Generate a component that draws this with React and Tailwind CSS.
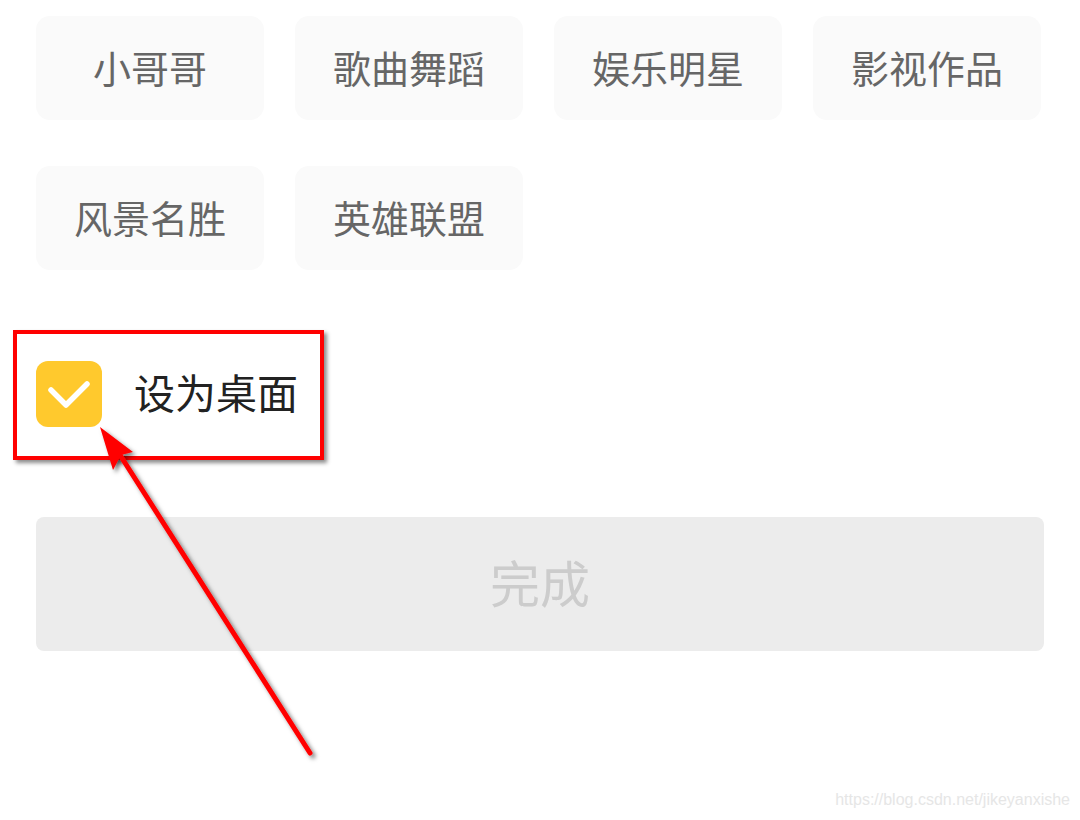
import { useState } from "react";

const tags = ["小哥哥", "歌曲舞蹈", "娱乐明星", "影视作品", "风景名胜", "英雄联盟"];

export default function App() {
  const [checked, setChecked] = useState(true);

  return (
    <div
      className="relative h-[820px] w-[1080px] overflow-hidden bg-white"
      style={{ fontFamily: '"Noto Sans CJK SC", "Noto Sans", sans-serif' }}
    >
      <div className="px-9 pt-4">
        {/* Tags */}
        <div className="grid grid-cols-[repeat(4,228px)] gap-x-[31px] gap-y-[46px]">
          {tags.map((t) => (
            <button
              key={t}
              className="flex h-[104px] items-center justify-center rounded-[14px] bg-[#fafafa] pb-1 text-[38px] text-[#666666]"
            >
              {t}
            </button>
          ))}
        </div>

        {/* Set as wallpaper */}
        <div className="mt-[91px] flex h-[66px] items-center gap-8">
          <button
            onClick={() => setChecked(!checked)}
            className={`flex h-[66px] w-[66px] shrink-0 items-center justify-center rounded-[12px] ${
              checked ? "bg-[#ffc92d]" : "bg-[#eeeeee]"
            }`}
          >
            {checked && (
              <svg width="66" height="66" viewBox="0 0 66 66">
                <path
                  d="M15 29 L30 44 L51 23"
                  fill="none"
                  stroke="white"
                  strokeWidth="5.5"
                  strokeLinecap="round"
                  strokeLinejoin="round"
                />
              </svg>
            )}
          </button>
          <span className="pb-1.5 text-[41px] leading-[56px] text-[#222222]">设为桌面</span>
        </div>

        {/* Done */}
        <button className="mt-[90px] flex h-[134px] w-[1008px] items-center justify-center rounded-[8px] bg-[#ececec] pb-1.5 text-[50px] text-[#cccccc]">
          完成
        </button>
      </div>

      {/* Annotation: red frame */}
      <div className="pointer-events-none absolute left-[13px] top-[330px] h-[130px] w-[311px] border-[4px] border-[#ff0000] shadow-[3px_3px_4px_rgba(0,0,0,0.45)]" />

      {/* Annotation: arrow */}
      <svg className="pointer-events-none absolute left-0 top-0" width="1080" height="820">
        <defs>
          <filter id="sh" x="-20%" y="-20%" width="140%" height="140%">
            <feDropShadow dx="3" dy="3" stdDeviation="2" floodColor="#000" floodOpacity="0.5" />
          </filter>
        </defs>
        <g filter="url(#sh)">
          <line x1="120" y1="455" x2="310" y2="753" stroke="#ff0000" strokeWidth="5" strokeLinecap="round" />
          <path d="M100 427 L133 452 L121 455 L113 470 Z" fill="#ff0000" />
        </g>
      </svg>

      <div
        className="absolute bottom-[8px] right-[10px] text-[16px] text-[#e6e6e6]"
        style={{ fontFamily: '"Liberation Sans", Arial, sans-serif' }}
      >
        https://blog.csdn.net/jikeyanxishe
      </div>
    </div>
  );
}
